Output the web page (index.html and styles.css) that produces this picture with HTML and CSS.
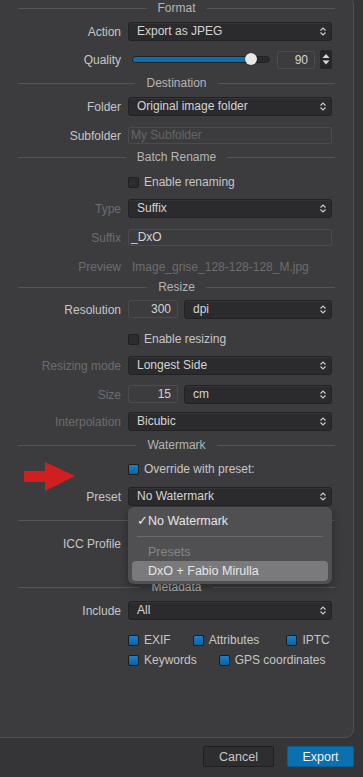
FILE: index.html
```html
<!DOCTYPE html>
<html lang="en">
<head>
    <meta charset="UTF-8">
    <meta name="viewport" content="width=device-width, initial-scale=1.0">
    <title>Export to disk</title>
    <link rel="stylesheet" href="styles.css">
</head>
<body>

<div class="panel">

    <div class="section-title"><span>Format</span></div>

    <div class="row mt6">
        <label>Action</label>
        <div class="select">Export as JPEG</div>
    </div>

    <div class="row mt9">
        <label>Quality</label>
        <div class="quality">
            <div class="slider">
                <div class="slider-fill"></div>
                <div class="slider-thumb"></div>
            </div>
            <div class="number quality-number">90</div>
            <div class="stepper">
                <svg width="12" height="19" viewBox="0 0 12 19"><path d="M6 4 L9.5 8 L2.5 8 Z" fill="#d8d8d8"/><path d="M2.5 10.5 L9.5 10.5 L6 14.5 Z" fill="#d8d8d8"/></svg>
            </div>
        </div>
    </div>

    <div class="section-title mt6"><span>Destination</span></div>

    <div class="row mt6">
        <label>Folder</label>
        <div class="select">Original image folder</div>
    </div>

    <div class="row mt10">
        <label>Subfolder</label>
        <div class="text-input placeholder">My Subfolder</div>
    </div>

    <div class="section-title mt4"><span>Batch Rename</span></div>

    <div class="row check-row mt10">
        <label></label>
        <label class="check"><input type="checkbox"> Enable renaming</label>
    </div>

    <div class="row mt10 disabled">
        <label>Type</label>
        <div class="select">Suffix</div>
    </div>

    <div class="row mt10 disabled">
        <label>Suffix</label>
        <div class="text-input">_DxO</div>
    </div>

    <div class="row plain-row mt12 disabled">
        <label>Preview</label>
        <div class="preview">Image_grise_128-128-128_M.jpg</div>
    </div>

    <div class="section-title mt4"><span>Resize</span></div>

    <div class="row mt5">
        <label>Resolution</label>
        <div class="pair">
            <div class="number">300</div>
            <div class="select">dpi</div>
        </div>
    </div>

    <div class="row check-row mt13">
        <label></label>
        <label class="check"><input type="checkbox"> Enable resizing</label>
    </div>

    <div class="row mt10 disabled">
        <label>Resizing mode</label>
        <div class="select">Longest Side</div>
    </div>

    <div class="row mt10 disabled">
        <label>Size</label>
        <div class="pair">
            <div class="number">15</div>
            <div class="select">cm</div>
        </div>
    </div>

    <div class="row mt8 disabled">
        <label>Interpolation</label>
        <div class="select">Bicubic</div>
    </div>

    <div class="section-title mt6"><span>Watermark</span></div>

    <div class="row check-row mt9">
        <label></label>
        <label class="check"><input type="checkbox" checked> Override with preset:</label>
    </div>

    <div class="row mt11">
        <label>Preset</label>
        <div class="select-wrap">
            <div class="select">No Watermark</div>
            <div class="menu">
                <div class="menu-item"><span class="tick">&#10003;</span>No Watermark</div>
                <div class="menu-sep"></div>
                <div class="menu-group">Presets</div>
                <div class="menu-item active">DxO + Fabio Mirulla</div>
            </div>
        </div>
    </div>

    <svg class="arrow" width="52" height="30" viewBox="0 0 52 30">
        <path d="M0 9 L21 9 L21 0 L51 14 L21 29 L21 20 L0 20 Z" fill="#d11f1f"/>
    </svg>

    <div class="section-title mt6"><span>ICC Profile</span></div>

    <div class="row mt6">
        <label>ICC Profile</label>
        <div class="select">sRGB</div>
    </div>

    <div class="section-title mt26"><span>Metadata</span></div>

    <div class="row mt6">
        <label>Include</label>
        <div class="select">All</div>
    </div>

    <div class="row check-row mt13">
        <label></label>
        <div class="checks">
            <label class="check"><input type="checkbox" checked> EXIF</label>
            <label class="check"><input type="checkbox" checked> Attributes</label>
            <label class="check push"><input type="checkbox" checked> IPTC</label>
        </div>
    </div>

    <div class="row check-row mt6">
        <label></label>
        <div class="checks">
            <label class="check"><input type="checkbox" checked> Keywords</label>
            <label class="check"><input type="checkbox" checked> GPS coordinates</label>
        </div>
    </div>

</div>

<footer>
    <button class="btn">Cancel</button>
    <button class="btn primary">Export</button>
</footer>

</body>
</html>
```

FILE: styles.css
```css
body {
    font-family: "Liberation Sans", Arial, sans-serif;
    font-size: 12px;
    background-color: #353537;
    color: #c6c6c6;
    margin: 0;
    padding: 0;
    overflow: hidden;
}
.panel {
    position: relative;
    box-sizing: border-box;
    width: 364px;
    height: 742px;
    margin: -4px 0 0 -10px;
    padding: 3px 0 0 9px;
    background-color: #3c3c3e;
    border: 1px solid #515153;
    border-radius: 9px;
}
.mt4 { margin-top: 4px; }
.mt5 { margin-top: 5px; }
.mt6 { margin-top: 6px; }
.mt8 { margin-top: 8px; }
.mt9 { margin-top: 9px; }
.mt10 { margin-top: 10px; }
.mt11 { margin-top: 11px; }
.mt12 { margin-top: 12px; }
.mt13 { margin-top: 13px; }
.mt26 { margin-top: 26px; }

.section-title {
    display: flex;
    align-items: center;
    gap: 11px;
    width: 317px;
    height: 16px;
    margin-left: 18px;
    color: #b4b4b4;
}
.section-title::before, .section-title::after {
    content: "";
    flex: 1;
    height: 1px;
    background-color: #555557;
}
.row {
    display: grid;
    grid-template-columns: 121px 204px;
    column-gap: 7px;
    align-items: center;
    height: 19px;
}
.row > label {
    text-align: right;
    white-space: nowrap;
}
.check-row {
    height: 14px;
}
.plain-row {
    height: 16px;
}
.disabled > label {
    color: #6c6c6e;
}
.select {
    box-sizing: border-box;
    height: 19px;
    line-height: 17px;
    padding: 0 8px;
    background-color: #2b2b2d;
    border: 1px solid #222224;
    border-radius: 3px;
    box-shadow: inset 0 1px 0 #353537;
    color: #d4d4d4;
    background-image: url("data:image/svg+xml,%3Csvg xmlns='http://www.w3.org/2000/svg' width='6' height='9'%3E%3Cpath d='M0.5 3.5 L3 1 L5.5 3.5 M0.5 5.5 L3 8 L5.5 5.5' fill='none' stroke='%23c8c8c8' stroke-width='1.2'/%3E%3C/svg%3E");
    background-repeat: no-repeat;
    background-position: right 5px center;
}
.text-input {
    box-sizing: border-box;
    height: 17px;
    line-height: 15px;
    padding: 0 2px;
    border: 1px solid #4b4b4d;
    border-radius: 2px;
    color: #d4d4d4;
}
.text-input.placeholder {
    color: #646466;
}
.preview {
    padding-left: 4px;
    color: #6c6c6e;
}
.number {
    box-sizing: border-box;
    height: 18px;
    line-height: 16px;
    padding: 0 6px;
    text-align: right;
    border: 1px solid #4b4b4d;
    border-radius: 2px;
    color: #d4d4d4;
}
.pair {
    display: grid;
    grid-template-columns: 50px 148px;
    column-gap: 6px;
}
.quality {
    display: flex;
    align-items: center;
    height: 18px;
}
.slider {
    position: relative;
    box-sizing: border-box;
    width: 138px;
    height: 7px;
    margin-left: 4px;
    background-color: #2a2a2c;
    border: 1px solid #222;
    border-radius: 4px;
}
.slider-fill {
    width: 118px;
    height: 100%;
    background-color: #0d6eae;
    border-radius: 3px;
}
.slider-thumb {
    position: absolute;
    top: -4px;
    left: 112px;
    width: 12px;
    height: 12px;
    background-color: #e8e8e8;
    border-radius: 50%;
    box-shadow: 0 0 1px #000;
}
.quality-number {
    width: 38px;
    margin-left: 7px;
}
.stepper {
    box-sizing: border-box;
    width: 12px;
    height: 19px;
    margin-left: 5px;
    background-color: #262628;
    border-radius: 2px;
}
.stepper svg {
    display: block;
}
.check {
    display: flex;
    align-items: center;
    gap: 5px;
    white-space: nowrap;
    color: #c6c6c6;
}
.check input {
    appearance: none;
    -webkit-appearance: none;
    box-sizing: border-box;
    width: 11px;
    height: 11px;
    margin: 0;
    background-color: #2c2c2e;
    border: 1px solid #1f1f21;
    border-radius: 2px;
}
.check input:checked {
    background: linear-gradient(#1a82c9, #0b62a2);
    border-color: #1c1c1e;
}
.checks {
    display: flex;
    gap: 22px;
}
.checks .push {
    margin-left: 5px;
}
.select-wrap {
    position: relative;
}
.menu {
    position: absolute;
    z-index: 2;
    top: 20px;
    left: 0;
    box-sizing: border-box;
    width: 204px;
    padding: 4px 4px 3px;
    background-color: #505052;
    border-radius: 6px;
    box-shadow: 0 3px 8px rgba(0, 0, 0, 0.35);
    color: #e6e6e6;
    font-size: 12.5px;
}
.menu-item {
    height: 20px;
    line-height: 20px;
    padding-left: 16px;
    border-radius: 4px;
}
.menu-item .tick {
    display: inline-block;
    width: 11px;
    margin-left: -11px;
}
.menu-item.active {
    background-color: #7a7a7c;
}
.menu-sep {
    height: 1px;
    margin: 5px 5px 6px;
    background-color: #69696b;
}
.menu-group {
    height: 18px;
    line-height: 18px;
    padding-left: 16px;
    color: #858587;
}
.arrow {
    position: absolute;
    left: 33px;
    top: 465px;
}
footer {
    display: flex;
    justify-content: flex-end;
    gap: 13px;
    padding: 8px 9px 0 0;
}
.btn {
    box-sizing: border-box;
    height: 21px;
    padding: 0;
    font-family: inherit;
    font-size: 12.5px;
    border-radius: 2px;
}
.btn {
    width: 71px;
    background-color: #2e2e30;
    border: 1px solid #1f1f21;
    color: #c6c6c6;
}
.btn.primary {
    width: 67px;
    background-color: #0a70b0;
    border-color: #0a5d92;
    color: #f2f2f2;
}
```
